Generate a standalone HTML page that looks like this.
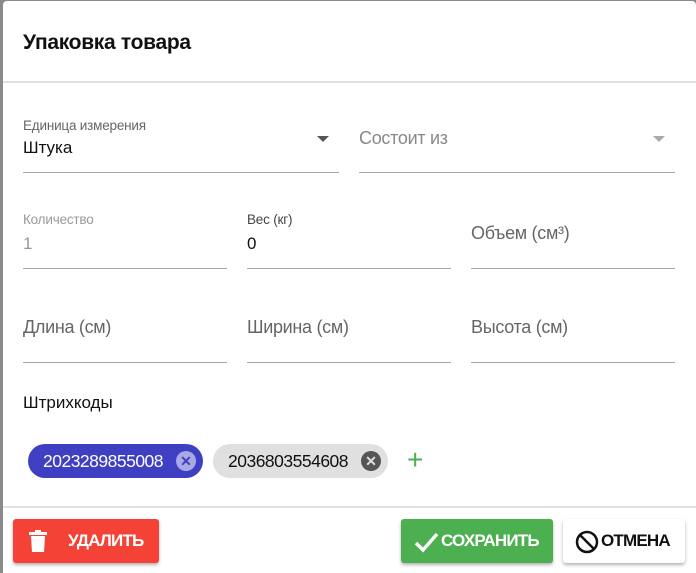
<!DOCTYPE html>
<html><head><meta charset="utf-8"><style>
*{box-sizing:border-box;margin:0;padding:0}
body{width:696px;height:573px;background:#8a8a8a;font-family:"Liberation Sans",sans-serif;position:relative;overflow:hidden}
.card{position:absolute;left:3px;top:1px;width:693px;height:572px;background:#fff;border-radius:4px 4px 0 0}
.abs{position:absolute}
.t{font-size:21px;font-weight:bold;color:#111;left:20px;top:30px;letter-spacing:-0.3px}
.hr{height:2px;background:#e0e0e0;left:0;right:0}
.lbl{font-size:13.5px;color:#666;letter-spacing:-0.2px}
.val{font-size:17px;color:#111}
.ph{font-size:18px;color:#888;letter-spacing:-0.3px}
.ul{height:1px;background:#aaa}
.arr{width:0;height:0;border-left:6px solid transparent;border-right:6px solid transparent;border-top:6px solid #555}
.chip{height:34px;border-radius:17px;font-size:17.5px;line-height:34px;padding-left:15px;letter-spacing:-0.5px}
.x{position:absolute;top:7px;width:20px;height:20px;border-radius:50%;font-size:14px;line-height:20px;text-align:center;font-weight:bold;letter-spacing:0;padding:0}
.btn{height:44px;border-radius:3px;box-shadow:0 2px 3px rgba(0,0,0,.3);font-size:17px;font-weight:bold;line-height:44px;letter-spacing:-0.8px}
</style></head><body>
<div class="card">
<div class="abs t">Упаковка товара</div>
<div class="abs hr" style="top:80px"></div>

<div class="abs lbl" style="left:20px;top:117px">Единица измерения</div>
<div class="abs val" style="left:20px;top:137px">Штука</div>
<div class="abs arr" style="left:314px;top:135px"></div>
<div class="abs ul" style="left:20px;top:171px;width:316px"></div>
<div class="abs ph" style="left:356px;top:127px">Состоит из</div>
<div class="abs arr" style="left:650px;top:135px;border-top-color:#aaa"></div>
<div class="abs ul" style="left:356px;top:171px;width:316px"></div>

<div class="abs lbl" style="left:20px;top:211px;color:#999">Количество</div>
<div class="abs val" style="left:20px;top:233px;color:#999">1</div>
<div class="abs ul" style="left:20px;top:267px;width:204px"></div>
<div class="abs lbl" style="left:244px;top:211px;color:#444">Вес (кг)</div>
<div class="abs val" style="left:244px;top:233px">0</div>
<div class="abs ul" style="left:244px;top:267px;width:204px"></div>
<div class="abs ph" style="left:468px;top:222px;color:#666">Объем (см³)</div>
<div class="abs ul" style="left:468px;top:267px;width:204px"></div>

<div class="abs ph" style="left:20px;top:316px;color:#666">Длина (см)</div>
<div class="abs ul" style="left:20px;top:361px;width:204px"></div>
<div class="abs ph" style="left:244px;top:316px;color:#666">Ширина (см)</div>
<div class="abs ul" style="left:244px;top:361px;width:204px"></div>
<div class="abs ph" style="left:468px;top:316px;color:#666">Высота (см)</div>
<div class="abs ul" style="left:468px;top:361px;width:204px"></div>

<div class="abs val" style="left:20px;top:392px">Штрихкоды</div>

<div class="abs chip" style="left:25px;top:443px;width:175px;background:#3f3fc4;color:#fff">2023289855008<span class="x" style="left:148px;background:#a9a9e6;color:#3f3fc4">✕</span></div>
<div class="abs chip" style="left:210px;top:443px;width:175px;background:#e0e0e0;color:#111">2036803554608<span class="x" style="left:148px;background:#555;color:#e0e0e0">✕</span></div>
<div class="abs" style="left:404px;top:442px;color:#4caf50;font-size:28px;line-height:34px">+</div>

<div class="abs hr" style="top:505px"></div>

<div class="abs btn" style="left:10px;top:518px;width:146px;background:#f44336;color:#fff">
<svg class="abs" style="left:16px;top:11px" width="18" height="22" viewBox="0 0 18 22"><rect x="0" y="2" width="18" height="3" fill="#fff"/><rect x="6" y="0" width="6" height="3" fill="#fff"/><path d="M2 6h14l-1 16H3z" fill="#fff"/></svg>
<span class="abs" style="left:55px">УДАЛИТЬ</span></div>
<div class="abs btn" style="left:398px;top:518px;width:152px;background:#4caf50;color:#fff">
<svg class="abs" style="left:12px;top:12px" width="26" height="22" viewBox="0 0 26 22"><path d="M3 12l7 7L24 3" stroke="#fff" stroke-width="3.5" fill="none"/></svg>
<span class="abs" style="left:40px">СОХРАНИТЬ</span></div>
<div class="abs btn" style="left:560px;top:518px;width:122px;background:#fff;color:#111">
<svg class="abs" style="left:12px;top:11px" width="24" height="24" viewBox="0 0 24 24"><circle cx="12" cy="12" r="10" stroke="#111" stroke-width="2.5" fill="none"/><path d="M5 5l14 14" stroke="#111" stroke-width="2.5"/></svg>
<span class="abs" style="left:38px">ОТМЕНА</span></div>
</div>
</body></html>
